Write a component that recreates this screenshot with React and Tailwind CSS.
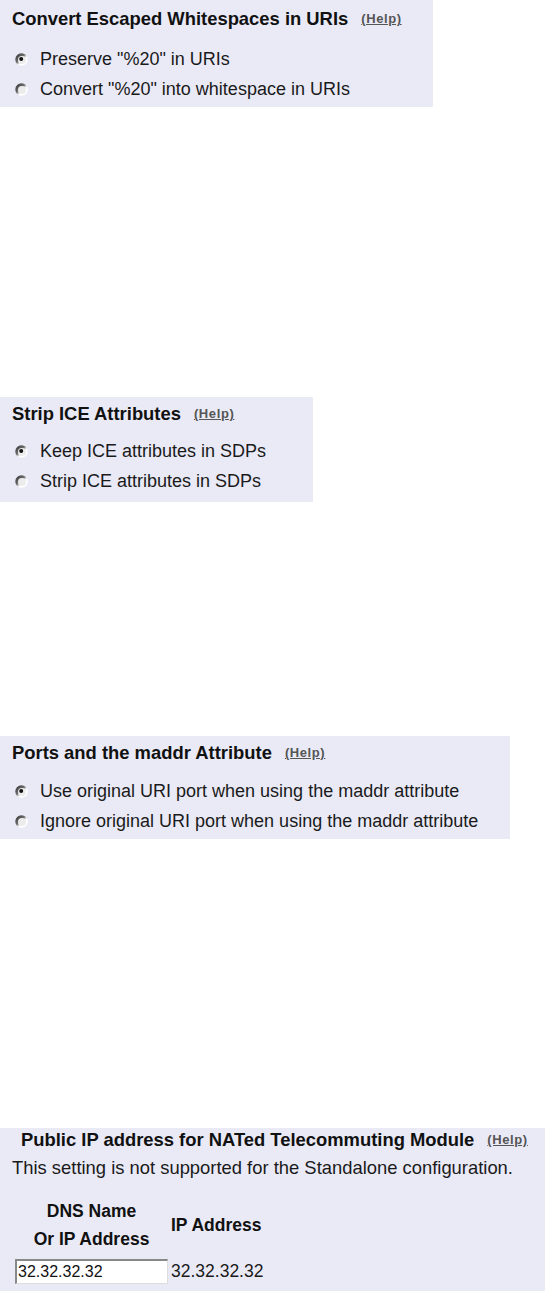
import React from 'react';

const font = { fontFamily: '"Liberation Sans", Arial, sans-serif' };

function Radio({ checked }) {
    const id = checked ? 'rg1' : 'rg0';
    return (
        <svg width="13" height="13" viewBox="0 0 13 13" className="shrink-0">
            <defs>
                <linearGradient id={id} x1="0" y1="0" x2="1" y2="1">
                    <stop offset="0" stopColor="#2e2e2e" />
                    <stop offset="0.42" stopColor="#6e6e6e" />
                    <stop offset="0.6" stopColor="#ffffff" />
                    <stop offset="1" stopColor="#ffffff" />
                </linearGradient>
            </defs>
            <circle cx="6.5" cy="6.5" r="6.2" fill={`url(#${id})`} />
            <circle cx="7" cy="7" r="4" fill="#ececec" />
            {checked && <circle cx="6.2" cy="6" r="2" fill="#111" />}
        </svg>
    );
}

function Help() {
    return (
        <a href="#" className="ml-[13px] text-[13px] font-bold text-[#555] underline tracking-[0.6px]">(Help)</a>
    );
}

function RadioPanel({ title, options, className, titleClass }) {
    return (
        <div className={`bg-[#eaeaf7] pl-[12px] ${className}`}>
            <div className={`flex items-center h-[22px] ${titleClass}`}>
                <span className="text-[18.4px] font-bold text-[#111]">{title}</span>
                <Help />
            </div>
            {options.map((opt, i) => (
                <label key={i} className="flex items-center h-[30px] pl-[3px] text-[18px] text-[#1a1a1a]">
                    <Radio checked={i === 0} />
                    <span className="ml-[12px]">{opt}</span>
                </label>
            ))}
        </div>
    );
}

export default function App() {
    return (
        <div className="bg-white w-[545px] min-h-[1291px] overflow-hidden" style={font}>
            <RadioPanel
                title="Convert Escaped Whitespaces in URIs"
                options={['Preserve "%20" in URIs', 'Convert "%20" into whitespace in URIs']}
                className="w-[433px] pt-[8px] pb-[3px]"
                titleClass="mb-[14px]"
            />
            <RadioPanel
                title="Strip ICE Attributes"
                options={['Keep ICE attributes in SDPs', 'Strip ICE attributes in SDPs']}
                className="w-[313px] mt-[290px] pt-[6px] pb-[6px]"
                titleClass="mb-[11px]"
            />
            <RadioPanel
                title="Ports and the maddr Attribute"
                options={['Use original URI port when using the maddr attribute', 'Ignore original URI port when using the maddr attribute']}
                className="w-[510px] mt-[234px] pt-[6px] pb-[3px]"
                titleClass="mb-[12px]"
            />

            <div className="bg-[#eaeaf7] mt-[289px] h-[170px] pt-[1px]">
                <div className="flex items-center h-[22px] pl-[21px]">
                    <span className="text-[18.4px] font-bold text-[#111]">Public IP address for NATed Telecommuting Module</span>
                    <Help />
                </div>
                <div className="h-[34px] flex items-center pl-[12px] text-[18.4px] text-[#1a1a1a]">
                    This setting is not supported for the Standalone configuration.
                </div>
                <div className="flex pl-[15px] mt-[12px]">
                    <div className="w-[153px] flex flex-col items-center text-[17.5px] font-bold text-[#111] leading-[28px]">
                        <span>DNS Name</span>
                        <span>Or IP Address</span>
                    </div>
                    <div className="ml-[3px] flex items-center text-[17.5px] font-bold text-[#111]">IP Address</div>
                </div>
                <div className="flex items-center pl-[15px] mt-[5px]">
                    <input
                        defaultValue="32.32.32.32"
                        className="w-[153px] h-[25px] bg-white border-t-2 border-l-2 border-b border-r border-t-[#888] border-l-[#888] border-b-[#ddd] border-r-[#ddd] pl-[1px] text-[16px] text-[#111] outline-none"
                        style={font}
                    />
                    <span className="ml-[3px] text-[17.5px] text-[#1a1a1a]">32.32.32.32</span>
                </div>
            </div>
        </div>
    );
}
